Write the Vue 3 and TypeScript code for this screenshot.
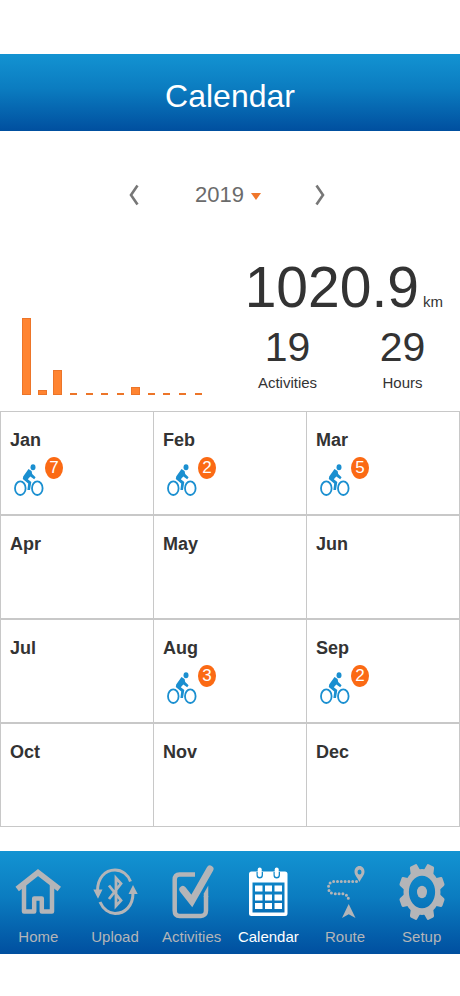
<script setup lang="ts">
import { ref } from 'vue'

interface Month {
  name: string
  rides: number
  bar: number
}

interface Tab {
  id: string
  label: string
}

const years: number[] = [2020, 2019, 2018, 2017]
const year = ref<number>(2019)
const activeTab = ref<string>('calendar')

function step(by: number): void {
  const next = year.value + by
  if (years.includes(next)) year.value = next
}

const months: Month[] = [
  { name: 'Jan', rides: 7, bar: 77 },
  { name: 'Feb', rides: 2, bar: 5 },
  { name: 'Mar', rides: 5, bar: 25 },
  { name: 'Apr', rides: 0, bar: 0 },
  { name: 'May', rides: 0, bar: 0 },
  { name: 'Jun', rides: 0, bar: 0 },
  { name: 'Jul', rides: 0, bar: 0 },
  { name: 'Aug', rides: 3, bar: 8 },
  { name: 'Sep', rides: 2, bar: 0 },
  { name: 'Oct', rides: 0, bar: 0 },
  { name: 'Nov', rides: 0, bar: 0 },
  { name: 'Dec', rides: 0, bar: 0 },
]

const tabs: Tab[] = [
  { id: 'home', label: 'Home' },
  { id: 'upload', label: 'Upload' },
  { id: 'activities', label: 'Activities' },
  { id: 'calendar', label: 'Calendar' },
  { id: 'route', label: 'Route' },
  { id: 'setup', label: 'Setup' },
]

const teeth: number[] = [22.5, 67.5, 112.5, 157.5, 202.5, 247.5, 292.5, 337.5]
</script>

<template>
  <div class="screen">
    <header class="title-bar">
      <h1>Calendar</h1>
    </header>

    <main>
      <div class="year-nav">
        <button type="button" class="step" aria-label="Previous year" @click="step(-1)">
          <svg viewBox="0 0 10 22" width="10" height="22"><path d="M8.500 1.500 2 11l6.500 9.500" /></svg>
        </button>
        <div class="year">
          <select v-model="year" aria-label="Year">
            <option v-for="y in years" :key="y" :value="y">{{ y }}</option>
          </select>
          <svg class="caret" viewBox="0 0 10 7" width="10" height="7"><path d="M0 0h10L5 7z" /></svg>
        </div>
        <button type="button" class="step" aria-label="Next year" @click="step(1)">
          <svg viewBox="0 0 10 22" width="10" height="22"><path d="M1.500 1.500 8 11l-6.500 9.500" /></svg>
        </button>
      </div>

      <section class="summary">
        <div class="chart">
          <div v-for="m in months" :key="m.name" class="slot">
            <div class="bar" :class="{ empty: m.bar === 0 }" :style="{ height: (m.bar || 2) + 'px' }"></div>
          </div>
        </div>
        <div class="totals">
          <p class="distance"><span class="big">1020.9</span><span class="unit">km</span></p>
          <p class="total"><span class="num">19</span><span class="unit">Activities</span></p>
          <p class="total"><span class="num">29</span><span class="unit">Hours</span></p>
        </div>
      </section>

      <ul class="months">
        <li v-for="m in months" :key="m.name">
          <h2>{{ m.name }}</h2>
          <div v-if="m.rides" class="rides">
            <svg class="bike" viewBox="0 0 30 32" width="30" height="32">
              <g fill="none" stroke="currentColor" stroke-width="1.8">
                <ellipse cx="6.300" cy="24.200" rx="5.300" ry="6.800" />
                <ellipse cx="23.300" cy="24.200" rx="5.300" ry="6.800" />
              </g>
              <g fill="currentColor">
                <ellipse cx="19" cy="3.200" rx="2.500" ry="3" />
                <path d="M14.500 5 17.600 7 18.200 10 21.600 13.300 20.200 15.300 16.300 12.600 13.800 15.200 17.300 18 16 26H13.400L14.200 19.600 8.800 15 9.200 12.500z" />
              </g>
            </svg>
            <span class="badge">{{ m.rides }}</span>
          </div>
        </li>
      </ul>
    </main>

    <nav class="tabs" aria-label="Main">
      <button
        v-for="t in tabs"
        :key="t.id"
        type="button"
        class="tab"
        :class="{ active: t.id === activeTab }"
        @click="activeTab = t.id"
      >
        <svg viewBox="0 0 56 60" width="56" height="60" fill="none" stroke="currentColor">
          <g v-if="t.id === 'home'" stroke-width="4.500">
            <path d="M7.200 25 28 8.500 49.300 25" stroke-width="5.500" />
            <path d="M14 21V47.500H24.200V34.500H31.800V47.500H42V21" stroke-linejoin="round" />
          </g>
          <g v-else-if="t.id === 'upload'" stroke-width="3">
            <path d="M10.500 27C10.500 14 18 6 28 6C35 6 41 10.500 43.500 17.500" />
            <path d="M13 38C16 45 22 49.500 28 49.500C38 49.500 46 42 46 29" />
            <path d="M6.300 25.500H15.500L11 34.800zM41.500 30H50.700L46 21z" fill="currentColor" stroke="none" />
            <path d="M22 21.500 34 36.500 29 42V14L34 19.500 22 35" stroke-width="2.800" />
          </g>
          <g v-else-if="t.id === 'activities'" stroke-width="4.500">
            <path d="M31 10.500H15.500C12.500 10.500 10.700 12.500 10.700 16V46.500C10.700 50 12.500 52 15.500 52H37C40 52 42 50 42 46.500V32" />
            <path d="M39.750 33V29.500L44.250 21.500V33z" fill="currentColor" stroke="none" />
            <path d="M18.800 25.500 27.800 37 46 5" stroke-width="7" stroke-linecap="round" />
          </g>
          <g v-else-if="t.id === 'calendar'" fill="currentColor" stroke="none">
            <path
              fill-rule="evenodd"
              d="M11.500 7.500H45Q47.500 7.500 47.500 10V49.500Q47.500 52 45 52H11.500Q9 52 9 49.500V10Q9 7.500 11.500 7.500zM12.500 18.500V48.500H44.500V18.500zM16.500 7V11Q16.500 14.500 19.700 14.500T23 11V7zM33.500 7V11Q33.500 14.500 36.700 14.500T40 11V7z"
            />
            <rect x="17.700" y="3.500" width="4" height="9.500" rx="2" />
            <rect x="34.700" y="3.500" width="4" height="9.500" rx="2" />
            <path d="M15 21.500h7.500v6H15zM25 21.500h7v6h-7zM34.500 21.500h7.500v6h-7.500zM15 30.500h7.500v6H15zM25 30.500h7v6h-7zM34.500 30.500h7.500v6h-7.500zM15 39h7.500v6H15zM25 39h7v6h-7zM34.500 39h7.500v6h-7.500z" />
          </g>
          <g v-else-if="t.id === 'route'">
            <path
              d="M39.500 17.500H17Q11.500 18 11.500 23.500T17 29.700H26Q31.500 30.500 32 38"
              stroke-width="3"
              stroke-linecap="round"
              stroke-dasharray="0 3.800"
            />
            <path
              d="M42.500 2C45.500 2 47.500 4.500 47.500 7.800C47.500 11 44.500 14 42.500 18C40.500 14 37.500 11 37.500 7.800C37.500 4.500 39.500 2 42.500 2zM42.500 5.500A2 2.500 0 1 0 42.500 10.500A2 2.500 0 1 0 42.500 5.500z"
              fill="currentColor"
              fill-rule="evenodd"
              stroke="none"
            />
            <path d="M31.700 40 38.500 54 31.700 50.300 25 54z" fill="currentColor" stroke="none" />
          </g>
          <g v-else transform="translate(28 28) scale(1 1.240)" fill="currentColor" stroke="none">
            <circle r="15.800" fill="none" stroke="currentColor" stroke-width="5.400" />
            <circle r="5" />
            <path v-for="a in teeth" :key="a" :transform="`rotate(${a})`" d="M-5.200 -16.500-3.900-22Q-3.700-23.200-2.500-23.200H2.500Q3.700-23.200 3.900-22L5.200-16.500z" />
          </g>
        </svg>
        <span>{{ t.label }}</span>
      </button>
    </nav>
  </div>
</template>

<style>
body {
  margin: 0;
  background: #fff;
}
</style>

<style scoped>
.screen {
  padding: 54px 0 42px;
  font-family: "Liberation Sans", Arial, sans-serif;
  color: #333;
}

h1,
h2,
p,
ul {
  margin: 0;
  padding: 0;
}

button,
select {
  border: 0;
  padding: 0;
  background: none;
  font: inherit;
  color: inherit;
}

.title-bar {
  padding: 22px 0 15px;
  background: linear-gradient(#1393d2, #0b7cc0 45%, #004f9f);
  text-align: center;
}

h1 {
  font-size: 32px;
  line-height: 40px;
  font-weight: 400;
  color: #fff;
}

.year-nav {
  display: flex;
  justify-content: center;
  align-items: center;
  gap: 54px;
  padding: 49px 6px 0 0;
  color: #6b6b6b;
}

.step {
  display: flex;
}

.step path {
  fill: none;
  stroke: #777;
  stroke-width: 2.600;
}

.year {
  position: relative;
  display: flex;
}

select {
  width: 68px;
  height: 30px;
  padding-left: 2px;
  appearance: none;
  font-size: 22px;
  line-height: 30px;
}

.caret {
  position: absolute;
  right: 0;
  top: 13px;
  fill: #f0762a;
  pointer-events: none;
}

.summary {
  display: grid;
  grid-template-columns: 1fr 1fr;
  align-items: end;
  padding: 47px 0 16px;
}

.chart {
  display: flex;
  align-items: flex-end;
  padding: 0 24px 0 19px;
}

.slot {
  flex: 1;
  display: flex;
  justify-content: center;
}

.bar {
  box-sizing: border-box;
  width: 9px;
  border: 1px solid #ec7529;
  background: #ff8431;
}

.bar.empty {
  width: 7px;
}

.totals {
  display: grid;
  grid-template-columns: 1fr 1fr;
  row-gap: 8px;
}

.distance {
  grid-column: 1 / -1;
  display: flex;
  justify-content: flex-end;
  align-items: baseline;
  gap: 4px;
  padding-right: 17px;
}

.big {
  font-size: 57px;
  line-height: 60px;
}

.total {
  display: flex;
  flex-direction: column;
  align-items: center;
  gap: 2px;
}

.num {
  font-size: 41px;
  line-height: 44px;
}

.unit {
  font-size: 15px;
  line-height: 24px;
}

.months {
  display: grid;
  grid-template-columns: repeat(3, 1fr);
  grid-auto-rows: minmax(102px, auto);
  gap: 2px 1px;
  padding: 1px;
  background: #c8c8c8;
  list-style: none;
}

.months li {
  padding: 16px 9px 0;
  background: #fff;
}

h2 {
  font-size: 18px;
  line-height: 24px;
  font-weight: 700;
}

.rides {
  display: flex;
  align-items: flex-start;
  gap: 1px;
  padding: 5px 0 0 4px;
}

.bike {
  margin-top: 7px;
  color: #1a8fd0;
}

.badge {
  width: 18px;
  height: 22px;
  border-radius: 50%;
  background: #fb6a14;
  color: #fff;
  font-size: 17px;
  line-height: 22px;
  text-align: center;
}

.tabs {
  display: grid;
  grid-template-columns: repeat(6, 1fr);
  margin-top: 24px;
  padding: 13px 0 7px;
  background: linear-gradient(#1393d2, #0b7cc0 45%, #004f9f);
}

.tab {
  display: flex;
  flex-direction: column;
  align-items: center;
  gap: 3px;
  font-size: 15px;
  line-height: 20px;
  color: #b4b5b8;
}

.tab.active {
  color: #fff;
}
</style>
